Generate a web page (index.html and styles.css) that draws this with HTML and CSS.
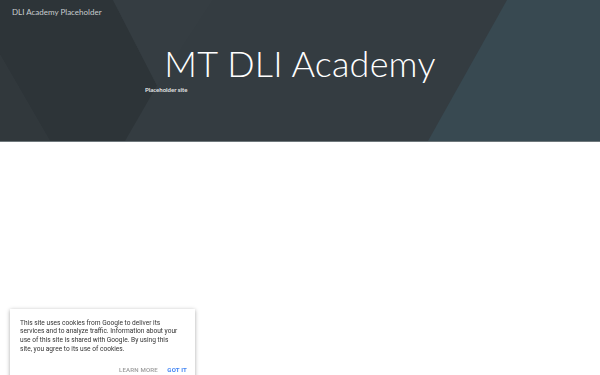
FILE: index.html
```html
<!DOCTYPE html>
<html lang="en">
<head>
<meta charset="utf-8">
<title>MT DLI Academy</title>
<link rel="stylesheet" href="styles.css">
</head>
<body>
<header class="hero">
  <svg class="hero-bg" viewBox="0 0 600 142" preserveAspectRatio="none" aria-hidden="true">
    <rect x="0" y="0" width="600" height="142" fill="#343c41"/>
    <polygon points="0,0 113,0 157,86 125,142 50,142 0,55" fill="#2d3438"/>
    <polygon points="0,55 50,142 0,142" fill="#31383c"/>
    <polygon points="113,0 213,0 157,86" fill="#353d42"/>
    <polygon points="507,0 600,0 600,142 428,142" fill="#384951"/>
  </svg>
  <div class="site-name">DLI Academy Placeholder</div>
  <div class="hero-inner">
    <h1 class="title">MT DLI Academy</h1>
    <p class="subtitle">Placeholder site</p>
  </div>
</header>
<main class="content"></main>
<div class="cookie">
  <p class="cookie-text">This site uses cookies from Google to deliver its<br>services and to analyze traffic. Information about your<br>use of this site is shared with Google. By using this<br>site, you agree to its use of cookies.</p>
  <div class="cookie-actions">
    <span class="btn btn-learn">LEARN MORE</span>
    <span class="btn btn-got">GOT IT</span>
  </div>
</div>
</body>
</html>
```

FILE: styles.css
```css
html, body {
  margin: 0;
  padding: 0;
  background: #ffffff;
}
body {
  font-family: Lato, "Liberation Sans", sans-serif;
  width: 600px;
  height: 375px;
  overflow: hidden;
}
.hero {
  position: relative;
  height: 142px;
  border-bottom: 1px solid #6e777b;
  box-sizing: border-box;
  display: flex;
  flex-direction: column;
}
.hero-bg {
  position: absolute;
  left: 0;
  top: 0;
  width: 100%;
  height: 100%;
  z-index: 0;
}
.site-name {
  position: relative;
  z-index: 1;
  padding: 6px 0 0 12px;
  font-size: 8px;
  line-height: 12px;
  color: #c8cccf;
}
.hero-inner {
  position: relative;
  z-index: 1;
  padding: 27px 145px 0 145px;
  display: flex;
  flex-direction: column;
}
.title {
  margin: 0;
  font-weight: 300;
  font-size: 36px;
  line-height: 36px;
  color: #ffffff;
  text-align: center;
  letter-spacing: 0.2px;
}
.subtitle {
  margin: 5px 0 0 0;
  font-weight: 700;
  font-size: 6px;
  line-height: 8px;
  color: #e4e6e7;
}
.content {
  height: 200px;
}
.cookie {
  position: fixed;
  left: 10px;
  top: 309px;
  width: 185px;
  height: 80px;
  box-sizing: border-box;
  padding: 9.5px 10px 0 10px;
  background: #ffffff;
  box-shadow: 0 1px 4px rgba(0,0,0,0.35);
  font-family: Roboto, "Liberation Sans", sans-serif;
}
.cookie-text {
  margin: 0;
  font-size: 6.6px;
  line-height: 8.7px;
  color: #333333;
  white-space: nowrap;
}
.cookie-actions {
  display: flex;
  justify-content: flex-end;
  gap: 9.5px;
  margin-top: 12.5px;
  margin-right: -2px;
}
.btn {
  font-size: 6.1px;
  font-weight: 500;
  line-height: 8px;
  letter-spacing: 0.15px;
}
.btn-learn {
  color: #9a9a9a;
}
.btn-got {
  color: #4285f4;
  font-weight: 700;
}
```
